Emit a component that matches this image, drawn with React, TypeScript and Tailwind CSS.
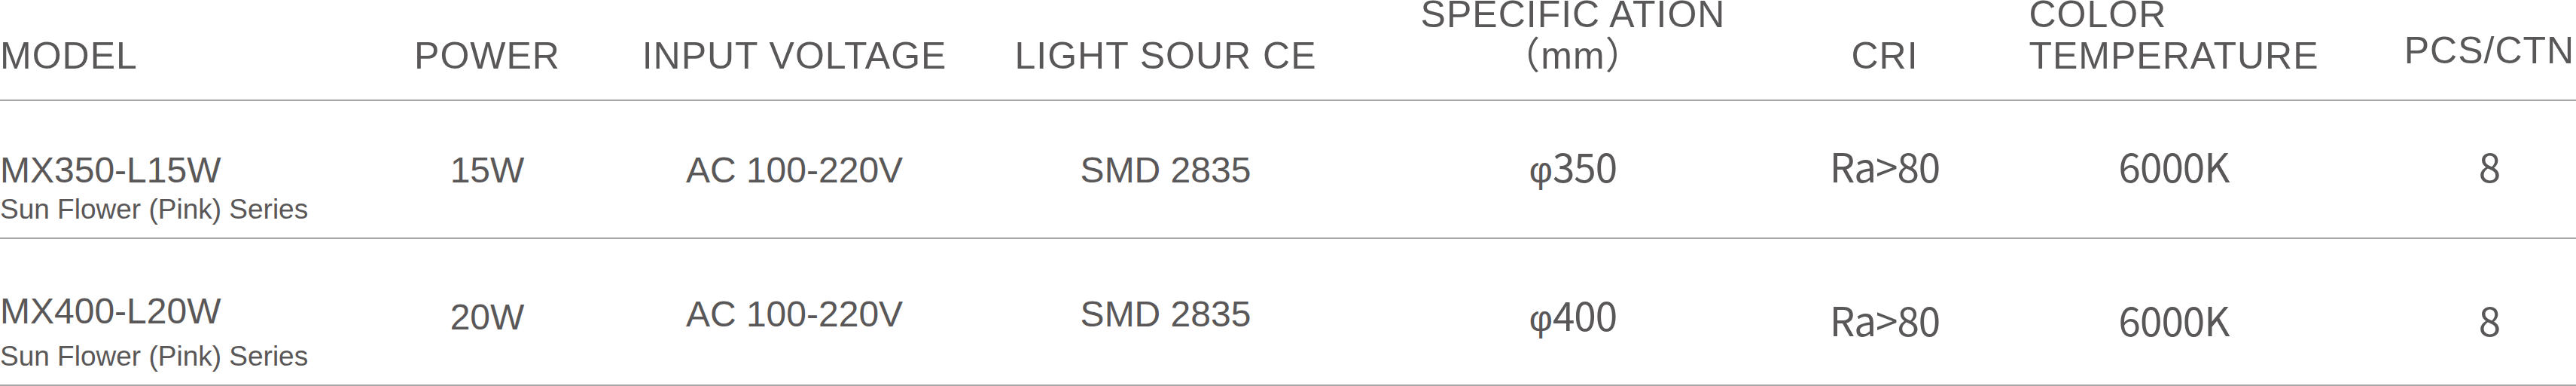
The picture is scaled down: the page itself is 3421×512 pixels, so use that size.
const cols = 'grid grid-cols-[500px_294px_522px_464px_618px_210px_558px_280px]';
const sans = "font-['Liberation_Sans','Noto_Sans_CJK_SC',sans-serif]";
const cjk = "font-['Noto_Sans_CJK_SC',sans-serif] text-[53px] leading-[53px] tracking-[-1px]";
const arial = 'text-[48px] leading-[48px]';

type Row = {
  model: string;
  series: string;
  height: string;
  modelPad: string;
  seriesGap: string;
  cells: { text: string; cls: string; phi?: boolean }[];
};

const rows: Row[] = [
  {
    model: 'MX350-L15W',
    series: 'Sun Flower (Pink) Series',
    height: 'h-[183px]',
    modelPad: 'pt-[68px]',
    seriesGap: 'mt-0',
    cells: [
      { text: '15W', cls: `${sans} ${arial} pt-[68px]` },
      { text: 'AC 100-220V', cls: `${sans} ${arial} pt-[68px]` },
      { text: 'SMD 2835', cls: `${sans} ${arial} pt-[68px]` },
      { text: '350', cls: `${cjk} pt-[59px]`, phi: true },
      { text: 'Ra>80', cls: `${cjk} pt-[59px]` },
      { text: '6000K', cls: `${cjk} pt-[59px]` },
      { text: '8', cls: `${cjk} pt-[59px]` },
    ],
  },
  {
    model: 'MX400-L20W',
    series: 'Sun Flower (Pink) Series',
    height: 'h-[195px]',
    modelPad: 'pt-[72px]',
    seriesGap: 'mt-[8px]',
    cells: [
      { text: '20W', cls: `${sans} ${arial} pt-[80px]` },
      { text: 'AC 100-220V', cls: `${sans} ${arial} pt-[76px]` },
      { text: 'SMD 2835', cls: `${sans} ${arial} pt-[76px]` },
      { text: '400', cls: `${cjk} pt-[73px]`, phi: true },
      { text: 'Ra>80', cls: `${cjk} pt-[80px]` },
      { text: '6000K', cls: `${cjk} pt-[80px]` },
      { text: '8', cls: `${cjk} pt-[80px]` },
    ],
  },
];

export default function App() {
  return (
    <div className="h-[512px] w-[3421px] overflow-hidden bg-white text-[#595757]">
      {/* 表头 */}
      <div
        className={`${cols} ${sans} h-[134px] grid-rows-[102px] items-end border-b-2 border-[#a6a6a6] pb-[30px] text-[50px] leading-[55px] tracking-[1px]`}
      >
        <div>MODEL</div>
        <div className="text-center">POWER</div>
        <div className="text-center">INPUT VOLTAGE</div>
        <div className="text-center">LIGHT SOUR CE</div>
        <div className="flex flex-col items-center">
          <span>SPECIFIC ATION</span>
          <span>（mm）</span>
        </div>
        <div className="text-center">CRI</div>
        <div className="flex justify-center">
          <div className="flex flex-col">
            <span>COLOR</span>
            <span>TEMPERATURE</span>
          </div>
        </div>
        <div className="flex justify-center whitespace-nowrap pb-[7px]">PCS/CTN</div>
      </div>

      {rows.map((r) => (
        <div
          key={r.model}
          className={`${cols} ${r.height} items-start border-b-2 border-[#a6a6a6]`}
        >
          <div className={`${sans} ${r.modelPad}`}>
            <div className="text-[48px] leading-[48px]">{r.model}</div>
            <div className={`${r.seriesGap} text-[37px] leading-[55px]`}>{r.series}</div>
          </div>
          {r.cells.map((c, i) => (
            <div key={i} className={`${c.cls} whitespace-nowrap text-center`}>
              {c.phi && (
                <span className="font-['Liberation_Sans',sans-serif] text-[48px] tracking-normal">φ</span>
              )}
              {c.text}
            </div>
          ))}
        </div>
      ))}
    </div>
  );
}
